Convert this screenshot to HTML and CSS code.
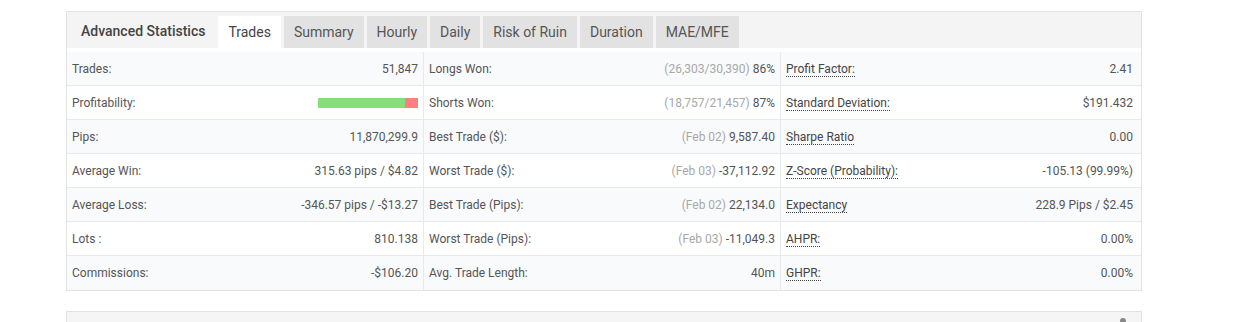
FILE: index.html
```html
<!DOCTYPE html>
<html lang="en">
<head>
  <meta charset="UTF-8">
  <title>Advanced Statistics</title>
  <link rel="stylesheet" href="styles.css">
</head>
<body>

<div class="page">
  <!-- Advanced statistics panel -->
  <div class="stats-panel">
    <div class="stats-tabs">
      <span class="stats-title">Advanced Statistics</span>
      <span class="tab active">Trades</span>
      <span class="tab">Summary</span>
      <span class="tab">Hourly</span>
      <span class="tab">Daily</span>
      <span class="tab">Risk of Ruin</span>
      <span class="tab">Duration</span>
      <span class="tab">MAE/MFE</span>
    </div>

    <div class="stats-body">
      <div class="stats-col">
        <div class="stat-row"><span class="stat-label">Trades:</span><span class="stat-value">51,847</span></div>
        <div class="stat-row">
          <span class="stat-label">Profitability:</span>
          <span class="profit-bar">
            <span class="bar-won" style="width: 87%"></span><span class="bar-lost"></span>
          </span>
        </div>
        <div class="stat-row"><span class="stat-label">Pips:</span><span class="stat-value">11,870,299.9</span></div>
        <div class="stat-row"><span class="stat-label">Average Win:</span><span class="stat-value">315.63 pips / $4.82</span></div>
        <div class="stat-row"><span class="stat-label">Average Loss:</span><span class="stat-value">-346.57 pips / -$13.27</span></div>
        <div class="stat-row"><span class="stat-label">Lots :</span><span class="stat-value">810.138</span></div>
        <div class="stat-row"><span class="stat-label">Commissions:</span><span class="stat-value">-$106.20</span></div>
      </div>

      <div class="stats-col">
        <div class="stat-row"><span class="stat-label">Longs Won:</span><span class="stat-value"><span class="muted">(26,303/30,390)</span> 86%</span></div>
        <div class="stat-row"><span class="stat-label">Shorts Won:</span><span class="stat-value"><span class="muted">(18,757/21,457)</span> 87%</span></div>
        <div class="stat-row"><span class="stat-label">Best Trade ($):</span><span class="stat-value"><span class="muted">(Feb 02)</span> 9,587.40</span></div>
        <div class="stat-row"><span class="stat-label">Worst Trade ($):</span><span class="stat-value"><span class="muted">(Feb 03)</span> -37,112.92</span></div>
        <div class="stat-row"><span class="stat-label">Best Trade (Pips):</span><span class="stat-value"><span class="muted">(Feb 02)</span> 22,134.0</span></div>
        <div class="stat-row"><span class="stat-label">Worst Trade (Pips):</span><span class="stat-value"><span class="muted">(Feb 03)</span> -11,049.3</span></div>
        <div class="stat-row"><span class="stat-label">Avg. Trade Length:</span><span class="stat-value">40m</span></div>
      </div>

      <div class="stats-col">
        <div class="stat-row"><span class="stat-label"><span class="hint">Profit Factor:</span></span><span class="stat-value">2.41</span></div>
        <div class="stat-row"><span class="stat-label"><span class="hint">Standard Deviation:</span></span><span class="stat-value">$191.432</span></div>
        <div class="stat-row"><span class="stat-label"><span class="hint">Sharpe Ratio</span></span><span class="stat-value">0.00</span></div>
        <div class="stat-row"><span class="stat-label"><span class="hint">Z-Score (Probability):</span></span><span class="stat-value">-105.13 (99.99%)</span></div>
        <div class="stat-row"><span class="stat-label"><span class="hint">Expectancy</span></span><span class="stat-value">228.9 Pips / $2.45</span></div>
        <div class="stat-row"><span class="stat-label"><span class="hint">AHPR:</span></span><span class="stat-value">0.00%</span></div>
        <div class="stat-row"><span class="stat-label"><span class="hint">GHPR:</span></span><span class="stat-value">0.00%</span></div>
      </div>
    </div>
  </div>

  <!-- next panel, cut off by the window -->
  <div class="next-panel">
    <span class="next-icon"></span>
  </div>
</div>

</body>
</html>
```

FILE: styles.css
```css
body {
  margin: 0;
  background: #fff;
  font-family: Roboto, "Liberation Sans", sans-serif;
  color: #555;
}
.page {
  padding: 11px 0 0 66px;
  width: 1076px;
}
.stats-panel {
  border: 1px solid #e3e3e3;
}
.stats-tabs {
  display: flex;
  align-items: flex-end;
  gap: 3px;
  height: 36px;
  background: #f4f4f4;
  font-size: 14px;
  color: #444;
}
.stats-title {
  align-self: stretch;
  display: flex;
  align-items: center;
  padding: 2px 10px 0 14px;
  font-weight: 500;
  color: #444;
}
.tab {
  height: 32px;
  line-height: 32px;
  padding: 0 10px;
  background: #e2e2e2;
  color: #555;
}
.tab.active {
  background: #fff;
  color: #444;
}
.stats-body {
  display: grid;
  grid-template-columns: 356px 357px 1fr;
  margin-top: 4px;
  font-size: 12px;
}
.stats-col {
  border-left: 1px solid #e6e9ed;
}
.stats-col:first-child {
  border-left: none;
}
.stats-col:last-child .stat-row {
  padding-right: 8px;
}
.stat-row {
  display: flex;
  justify-content: space-between;
  align-items: center;
  height: 33px;
  padding: 0 5px;
  border-bottom: 1px solid #e6e9ed;
}
.stat-row:last-child {
  height: 34px;
  border-bottom: none;
}
.stat-row:nth-child(odd) {
  background: #f9fafc;
}
.stat-label {
  color: #555;
}
.stat-value {
  color: #555;
}
.muted {
  color: #a8a8a8;
}
.hint {
  border-bottom: 1px dotted #444;
  color: #444;
}
.profit-bar {
  display: flex;
  width: 100px;
  height: 10px;
  background: #ff8080;
}
.bar-won {
  background: #86e07a;
}
.next-panel {
  position: relative;
  margin-top: 20px;
  height: 40px;
  background: #f5f5f5;
  border: 1px solid #e3e3e3;
}
.next-icon {
  position: absolute;
  top: 6px;
  right: 15px;
  width: 6px;
  height: 6px;
  border-radius: 50%;
  background: #888;
}
```
